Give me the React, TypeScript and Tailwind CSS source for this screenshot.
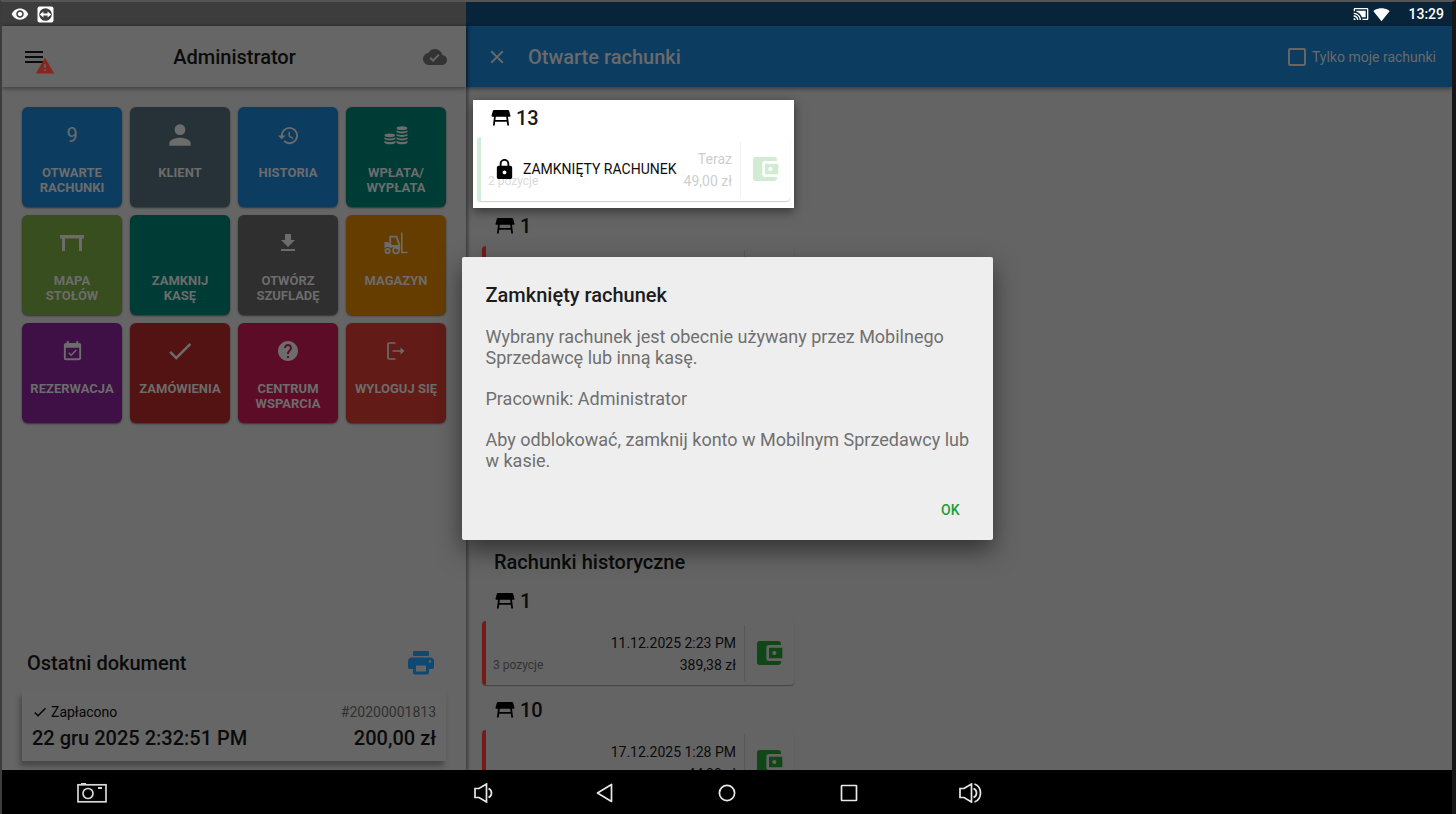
import type { ReactNode } from 'react';
import {
  MdAccountBalanceWallet,
  MdCastConnected,
  MdCheck,
  MdClose,
  MdCloudDone,
  MdEventAvailable,
  MdFileDownload,
  MdHelp,
  MdHistory,
  MdLock,
  MdMenu,
  MdPerson,
  MdSignalWifi4Bar,
  MdVisibility,
  MdWarning,
} from 'react-icons/md';

function TeamViewerIcon() {
  return (
    <svg width="17" height="17" viewBox="0 0 17 17">
      <rect x="0.5" y="0.5" width="16" height="16" rx="2" fill="#fff" />
      <circle cx="8.5" cy="8.5" r="6.3" fill="#3d3d3d" />
      <path d="M2.8 8.5l3.6-3v1.9h4.2V5.5l3.6 3-3.6 3V9.6H6.4v1.9z" fill="#fff" />
    </svg>
  );
}

function DeskIcon() {
  return (
    <svg width="24" height="17" viewBox="0 0 24 17" fill="currentColor">
      <path d="M0 0h24v3.5h-2V16h-3V3.5H5V16H2V3.5H0z" />
    </svg>
  );
}

function CoinsIcon() {
  return (
    <svg width="24" height="19" viewBox="0 0 24 19" fill="currentColor">
      <ellipse cx="18" cy="2.2" rx="5.3" ry="1.9" />
      <path d="M12.5 4.2c2 1.8 9 1.8 11 0v1.9c-2 1.9-9 1.9-11 0z" />
      <path d="M12.5 7.7c2 1.8 9 1.8 11 0v1.9c-2 1.9-9 1.9-11 0z" />
      <path d="M12.5 11.2c2 1.8 9 1.8 11 0v1.9c-2 1.9-9 1.9-11 0z" />
      <path d="M12.5 14.7c2 1.8 9 1.8 11 0v2c-2 2-9 2-11 0z" />
      <ellipse cx="5.8" cy="9.3" rx="5.3" ry="1.9" />
      <path d="M.4 11.2c2 1.8 9 1.8 11 0v1.9c-2 1.9-9 1.9-11 0z" />
      <path d="M.4 14.7c2 1.8 9 1.8 11 0v2c-2 2-9 2-11 0z" />
    </svg>
  );
}

function ForkliftIcon() {
  return (
    <svg width="24" height="23" viewBox="0 0 24 23" fill="none" stroke="currentColor">
      <path d="M17.8 0.5V20.5H23.5" strokeWidth="1.6" />
      <path d="M6.2 12V4.6h6.3l2.8 8v5" strokeWidth="1.8" strokeLinejoin="round" />
      <path d="M.5 10c3 0 5.5.5 7.500 3h7.800v4.500h-3a4 4 0 0 0-6-1.500c-2-1.500-5-1.500-6.300.5z" fill="currentColor" stroke="none" />
      <circle cx="3.600" cy="19" r="2.200" strokeWidth="1.800" />
      <circle cx="12" cy="18.500" r="2.900" strokeWidth="1.800" />
    </svg>
  );
}

function LogoutIcon() {
  return (
    <svg width="18" height="18" viewBox="0 0 18 18" fill="none" stroke="currentColor" strokeWidth="1.700">
      <path d="M8.500 1H2.300Q1 1 1 2.300v13.400Q1 17 2.300 17H8.500M5.500 9H16" />
      <path d="M13.500 5.600L17.500 9l-4 3.400z" fill="currentColor" stroke="none" />
    </svg>
  );
}

function PrinterIcon() {
  return (
    <svg width="26" height="24" viewBox="0 0 26 24" fill="#104874">
      <rect x="5" y="0" width="16" height="5" rx="1" />
      <path
        fillRule="evenodd"
        d="M4 6.500h18a4 4 0 0 1 4 4V16a2 2 0 0 1-2 2h-3v3.500a2 2 0 0 1-2 2H7a2 2 0 0 1-2-2V18H2a2 2 0 0 1-2-2v-5.500a4 4 0 0 1 4-4zM8 14.500v6h10v-6zM22 9.200a1.300 1.300 0 1 0 0 2.600 1.300 1.300 0 0 0 0-2.600z"
      />
    </svg>
  );
}

function TableIcon() {
  return (
    <svg width="20" height="16" viewBox="0 0 20 16">
      <path d="M3 0h14q.8 0 1.100.8l1.400 5q.2 1-.8 1H1.300q-1 0-.8-1l1.400-5Q2.200 0 3 0z" fill="#000" />
      <path d="M4 6L2.800 15.500M16 6l1.200 9.500M3.500 10.800h13" stroke="#000" strokeWidth="1.800" fill="none" />
    </svg>
  );
}

function VolumeIcon({ loud }: { loud?: boolean }) {
  return (
    <svg
      width={loud ? 24 : 19}
      height="20"
      viewBox={loud ? '0 0 24 20' : '0 0 19 20'}
      fill="none"
      stroke="#e8e8e8"
      strokeWidth="1.700"
    >
      <path d="M1 5.500h4L12.500 1v18L5 14.500H1z" />
      <path d="M14.500 5.500c4 1.500 4 7.500 0 9" />
      {loud && <path d="M15.500 1c8 3 8 15 0 18" />}
    </svg>
  );
}

function CameraIcon() {
  return (
    <svg width="30" height="20" viewBox="0 0 30 20" fill="none" stroke="#d8d8d8" strokeWidth="1.700">
      <rect x="1" y="1.800" width="28" height="17" />
      <circle cx="11" cy="10.500" r="5" />
      <path d="M4 .8h5M21 5h4" strokeWidth="2" />
    </svg>
  );
}

const tiles: { label: string[]; color: string; icon: ReactNode }[] = [
  { label: ['OTWARTE', 'RACHUNKI'], color: 'bg-[#0d3c61]', icon: <span className="text-xl">9</span> },
  { label: ['KLIENT'], color: 'bg-[#263238]', icon: <MdPerson size={32} /> },
  { label: ['HISTORIA'], color: 'bg-[#0d3c61]', icon: <MdHistory size={23} /> },
  { label: ['WPŁATA/', 'WYPŁATA'], color: 'bg-[#003c36]', icon: <CoinsIcon /> },
  { label: ['MAPA', 'STOŁÓW'], color: 'bg-[#384e1e]', icon: <DeskIcon /> },
  { label: ['ZAMKNIJ', 'KASĘ'], color: 'bg-[#003c36]', icon: null },
  { label: ['OTWÓRZ', 'SZUFLADĘ'], color: 'bg-[#2f2f2f]', icon: <MdFileDownload size={24} /> },
  { label: ['MAGAZYN'], color: 'bg-[#663d00]', icon: <ForkliftIcon /> },
  { label: ['REZERWACJA'], color: 'bg-[#3e1046]', icon: <MdEventAvailable size={23} /> },
  { label: ['ZAMÓWIENIA'], color: 'bg-[#541313]', icon: <MdCheck size={30} /> },
  { label: ['CENTRUM', 'WSPARCIA'], color: 'bg-[#5d0c28]', icon: <MdHelp size={24} /> },
  { label: ['WYLOGUJ SIĘ'], color: 'bg-[#621b16]', icon: <LogoutIcon /> },
];

type Bill = { items: string; date: string; total: string };

function BillContent({ bill }: { bill?: Bill }) {
  return (
    <>
      <div className="flex flex-1 items-end justify-between pb-[9px] pl-[7px] pr-2">
        <span className="text-xs leading-[22px] text-[#333]">{bill?.items}</span>
        <div className="text-right text-sm leading-[22px] text-[#0b0b0b]">
          <div>{bill?.date}</div>
          <div>{bill?.total}</div>
        </div>
      </div>
      <div className="my-1 w-px bg-[#585858]" />
      <div className="flex w-[49px] items-center pl-2 text-[#0f4717]">
        <MdAccountBalanceWallet size={32} />
      </div>
    </>
  );
}

function TableGroup({ table, bill }: { table: string; bill?: Bill }) {
  return (
    <section className="ml-3 w-80 px-1 pb-[7px]">
      <h3 className="flex h-[38px] items-center gap-[5px] pb-0.5 pl-[13px] text-xl font-medium text-[#0b0b0b]">
        <TableIcon />
        {table}
      </h3>
      <div className="flex h-16 rounded border-l-4 border-[#761b16] shadow-[0_1px_1px_#444]">
        <BillContent bill={bill} />
      </div>
    </section>
  );
}

function LockedGroup() {
  return (
    <section className="relative z-20 ml-[7px] w-[321px] bg-white px-1 pb-[7px] shadow-[0_3px_10px_rgba(0,0,0,0.5)]">
      <h3 className="flex h-[37px] items-center gap-[5px] pb-0.5 pl-[14px] text-xl font-medium text-[#1a1a1a]">
        <TableIcon />
        13
      </h3>
      <div className="relative flex h-16 rounded border-l-4 border-[#d2eed6] shadow-[0_1px_1px_#ccc]">
        <div className="flex flex-1 items-end justify-between pb-[9px] pl-[7px] pr-2">
          <span className="text-xs leading-[22px] text-[#dadada]">2 pozycje</span>
          <div className="text-right text-sm leading-[22px] text-[#cecece]">
            <div>Teraz</div>
            <div>49,00 zł</div>
          </div>
        </div>
        <div className="my-1 w-px bg-[#f2f2f2]" />
        <div className="flex w-[49px] items-center pl-2 text-[#d2ecd4]">
          <MdAccountBalanceWallet size={32} />
        </div>
        <div className="absolute inset-0 flex items-center gap-[7px] pl-3 text-sm text-[#0d0d0d]">
          <MdLock size={23} className="text-black" />
          ZAMKNIĘTY RACHUNEK
        </div>
      </div>
    </section>
  );
}

function Sidebar() {
  return (
    <aside className="z-10 flex w-[32%] flex-col bg-[#656565] shadow-[2px_0_3px_rgba(0,0,0,0.4)]">
      <header className="flex h-[61px] items-center justify-between bg-[#666] pl-5 pr-[19px] shadow-[0_2px_4px_rgba(0,0,0,0.35)]">
        <button aria-label="Menu" className="relative text-[#0b0b0b]">
          <MdMenu size={24} />
          <MdWarning size={20} className="absolute left-[13px] top-[11px] text-[#86271f]" />
        </button>
        <h1 className="text-xl font-medium text-[#0b0b0b]">Administrator</h1>
        <MdCloudDone size={24} className="text-[#333]" />
      </header>

      <div className="grid grid-cols-4 gap-2 px-5 pt-5">
        {tiles.map((tile) => (
          <button
            key={tile.label[0]}
            className={`flex h-[100px] flex-col items-center rounded-md pt-3 text-[#6c6c6c] shadow-[0_1px_2px_rgba(0,0,0,0.5)] ${tile.color}`}
          >
            <span className="flex h-8 items-center">{tile.icon}</span>
            <span className="mt-[14px] whitespace-nowrap text-[13px] font-bold leading-[15px]">
              {tile.label.map((line) => (
                <span key={line} className="block">{line}</span>
              ))}
            </span>
          </button>
        ))}
      </div>

      {/* Last document */}
      <div className="mt-auto px-5 pb-[9px]">
        <div className="flex items-center justify-between pb-[14px] pl-[5px] pr-3">
          <h2 className="text-xl font-medium text-[#0b0b0b]">Ostatni dokument</h2>
          <button aria-label="Drukuj">
            <PrinterIcon />
          </button>
        </div>
        <div className="flex h-[70px] flex-col justify-center bg-[#666] px-[10px] shadow-[-2px_5px_5px_rgba(0,0,0,0.3)]">
          <div className="flex items-center justify-between text-sm leading-6">
            <span className="flex items-center gap-[3px] text-[#050505]">
              <MdCheck size={16} />
              Zapłacono
            </span>
            <span className="text-[#303030]">#20200001813</span>
          </div>
          <div className="flex items-center justify-between text-xl font-medium text-[#0b0b0b]">
            <span>22 gru 2025 2:32:51 PM</span>
            <span>200,00 zł</span>
          </div>
        </div>
      </div>
    </aside>
  );
}

function BillsPanel() {
  return (
    <main className="flex min-w-0 flex-1 flex-col bg-[#646464]">
      <header className="flex h-[61px] shrink-0 items-center bg-[#0d3c61] pl-5 pr-4 text-[#6a6a6a] shadow-[0_2px_4px_rgba(0,0,0,0.4)]">
        <button aria-label="Zamknij">
          <MdClose size={22} />
        </button>
        <h2 className="ml-5 text-xl font-medium">Otwarte rachunki</h2>
        <label className="ml-auto flex items-center gap-[6px] text-sm">
          <input type="checkbox" className="size-[18px] appearance-none rounded-xs border-2 border-[#666]" />
          Tylko moje rachunki
        </label>
      </header>
      <div className="min-h-0 flex-1 overflow-hidden pt-[13px]">
        <LockedGroup />
        <TableGroup table="1" />
        <h2 className="mt-56 flex h-[42px] items-center pl-7 text-xl font-medium text-[#0b0b0b]">
          Rachunki historyczne
        </h2>
        <TableGroup table="1" bill={{ items: '3 pozycje', date: '11.12.2025 2:23 PM', total: '389,38 zł' }} />
        <TableGroup table="10" bill={{ items: '', date: '17.12.2025 1:28 PM', total: '44,00 zł' }} />
      </div>
    </main>
  );
}

function LockedDialog() {
  return (
    <div className="absolute inset-0 z-30 flex items-center justify-center">
      <div
        role="dialog"
        aria-labelledby="dialog-title"
        className="w-[531px] rounded-xs bg-[#eee] pb-3 pl-6 pr-4 pt-6 shadow-[0_10px_24px_rgba(0,0,0,0.5)]"
      >
        <h2 id="dialog-title" className="text-xl font-medium leading-7 text-[#1c1c1c]">
          Zamknięty rachunek
        </h2>
        <div className="mt-[17px] space-y-5 text-lg leading-[21px] text-[#707070]">
          <p>Wybrany rachunek jest obecnie używany przez Mobilnego Sprzedawcę lub inną kasę.</p>
          <p>Pracownik: Administrator</p>
          <p>Aby odblokować, zamknij konto w Mobilnym Sprzedawcy lub w kasie.</p>
        </div>
        <div className="mt-[21px] flex justify-end">
          <button className="h-9 px-[17px] text-sm font-medium text-[#229c36]">OK</button>
        </div>
      </div>
    </div>
  );
}

function NavBar() {
  return (
    <nav className="grid h-11 shrink-0 grid-cols-[1fr_610px_1fr] items-center bg-black pt-0.5">
      <button aria-label="Zrzut ekranu" className="justify-self-start pl-[75px]">
        <CameraIcon />
      </button>
      <div className="grid grid-cols-5 items-center justify-items-center">
        <button aria-label="Ciszej"><VolumeIcon /></button>
        <button aria-label="Wstecz">
          <svg width="18" height="20" viewBox="0 0 18 20" fill="none" stroke="#e8e8e8" strokeWidth="1.700">
            <path d="M15.500 1.500v17L1.500 10z" strokeLinejoin="round" />
          </svg>
        </button>
        <button aria-label="Ekran główny">
          <svg width="18" height="18" viewBox="0 0 18 18" fill="none" stroke="#e8e8e8" strokeWidth="1.700">
            <circle cx="9" cy="9" r="7.600" />
          </svg>
        </button>
        <button aria-label="Ostatnie">
          <svg width="18" height="18" viewBox="0 0 18 18" fill="none" stroke="#e8e8e8" strokeWidth="1.700">
            <rect x="1.500" y="1.500" width="15" height="15" rx="0.500" />
          </svg>
        </button>
        <button aria-label="Głośniej"><VolumeIcon loud /></button>
      </div>
    </nav>
  );
}

export default function App() {
  return (
    <div className="flex h-screen flex-col overflow-hidden border-l-2 border-r-4 border-t-2 border-l-[#3c3c3c] border-r-[#161616] border-t-[#555] bg-black font-['Roboto',sans-serif]">
      <div className="flex h-6 shrink-0 text-white">
        <div className="flex w-[32%] items-center gap-2 bg-[#3d3d3d] pl-[9px]">
          <MdVisibility size={18} />
          <TeamViewerIcon />
        </div>
        <div className="flex flex-1 items-center justify-end bg-[#08243a] pr-2">
          <MdCastConnected size={16} />
          <MdSignalWifi4Bar size={17} className="ml-1" />
          <span className="ml-[18px] text-sm font-medium">13:29</span>
        </div>
      </div>
      <div className="relative flex min-h-0 flex-1">
        <Sidebar />
        <BillsPanel />
        <LockedDialog />
      </div>
      <NavBar />
    </div>
  );
}
